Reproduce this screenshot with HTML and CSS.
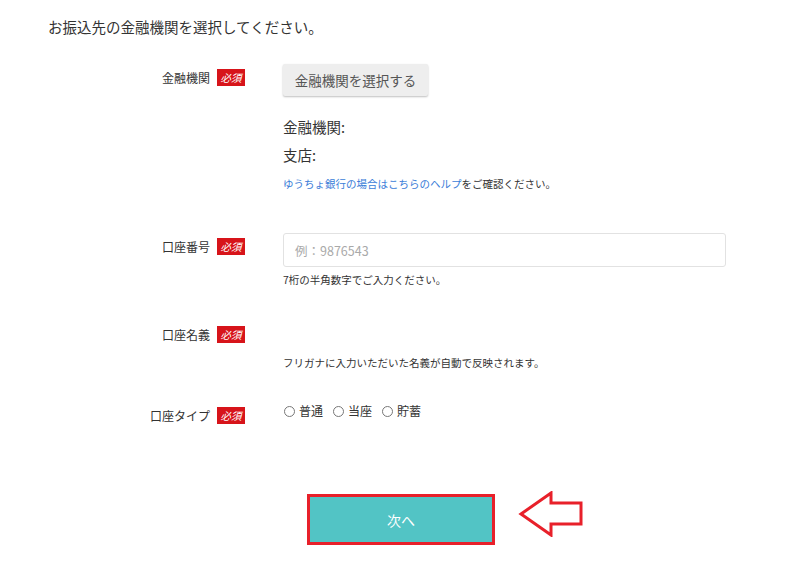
FILE: index.html
```html
<!DOCTYPE html>
<html lang="ja">
<head>
<meta charset="utf-8">
<title>振込先</title>
<link rel="stylesheet" href="styles.css">
</head>
<body>
<p class="lead">お振込先の金融機関を選択してください。</p>
<div class="form">
  <div class="row row-bank">
    <div class="label"><span class="label-text">金融機関</span><span class="req">必須</span></div>
    <div class="field">
      <button class="select-btn" type="button">金融機関を選択する</button>
      <div class="info info-first">金融機関:</div>
      <div class="info">支店:</div>
      <p class="help"><a class="link" href="#">ゆうちょ銀行の場合はこちらのヘルプ</a>をご確認ください。</p>
    </div>
  </div>
  <div class="row row-number">
    <div class="label"><span class="label-text">口座番号</span><span class="req">必須</span></div>
    <div class="field">
      <div class="input"><span class="placeholder">例：9876543</span></div>
      <p class="hint">7桁の半角数字でご入力ください。</p>
    </div>
  </div>
  <div class="row row-name">
    <div class="label"><span class="label-text">口座名義</span><span class="req">必須</span></div>
    <div class="field">
      <div class="spacer"></div>
      <p class="hint">フリガナに入力いただいた名義が自動で反映されます。</p>
    </div>
  </div>
  <div class="row row-type">
    <div class="label"><span class="label-text">口座タイプ</span><span class="req">必須</span></div>
    <div class="field">
      <div class="radios">
        <label class="radio"><span class="circle"></span>普通</label>
        <label class="radio"><span class="circle"></span>当座</label>
        <label class="radio"><span class="circle"></span>貯蓄</label>
      </div>
    </div>
  </div>
</div>
<div class="next-wrap">
  <button class="next-btn" type="button">次へ</button>
  <svg class="arrow" width="66" height="46" viewBox="0 0 66 46">
    <polygon points="3,23 33,2 33,12 63,12 63,33 33,33 33,44" fill="none" stroke="#e8202a" stroke-width="3" stroke-linejoin="miter"/>
  </svg>
</div>
</body>
</html>
```
FILE: styles.css
```css
* { box-sizing: border-box; }
body {
  margin: 0;
  font-family: "Noto Sans CJK JP", "Noto Sans", sans-serif;
  color: #333;
  background: #fff;
}
.lead {
  margin: 0;
  padding: 17px 0 0 48px;
  font-size: 14.5px;
  line-height: 20px;
}
.form { width: 726px; }
.row {
  display: grid;
  grid-template-columns: 245px 1fr;
  column-gap: 38px;
}
.label {
  display: flex;
  justify-content: flex-end;
  align-items: center;
  height: 23px;
  padding-top: 3px;
  align-self: start;
}
.label-text {
  font-size: 12px;
  line-height: 17px;
  margin-right: 7px;
}
.req {
  display: inline-block;
  width: 28px;
  height: 17px;
  background: #d7141a;
  color: #fff;
  font-size: 10.5px;
  line-height: 17px;
  text-align: center;
  font-style: italic;
}
.row-bank { margin-top: 27px; }
.select-btn {
  display: block;
  width: 145px;
  height: 32px;
  border: 0;
  border-radius: 2px;
  background: #eeeeee;
  box-shadow: 0 1px 2px rgba(0,0,0,0.25);
  color: #555;
  font-family: inherit;
  font-size: 13.5px;
  padding: 0;
}
.info {
  font-size: 14.5px;
  line-height: 28px;
}
.info-first { margin-top: 17px; }
.help {
  margin: 5px 0 0;
  font-size: 10.5px;
  line-height: 20px;
}
.link { color: #3b7dd8; text-decoration: none; }
.row-number { margin-top: 39px; }
.input {
  height: 34px;
  border: 1px solid #e2e2e2;
  border-radius: 3px;
  padding-left: 11px;
  display: flex;
  align-items: center;
}
.placeholder {
  color: #a9a9a9;
  font-size: 12.5px;
}
.hint {
  margin: 5px 0 0;
  font-size: 10.5px;
  line-height: 16px;
}
.row-name { margin-top: 33px; }
.spacer { height: 29px; }
.row-type { margin-top: 31px; }
.radios {
  display: flex;
  gap: 9px;
  height: 18px;
  align-items: center;
}
.radio {
  display: flex;
  align-items: center;
  font-size: 12px;
  line-height: 18px;
}
.circle {
  width: 11px;
  height: 11px;
  border: 1px solid #777;
  border-radius: 50%;
  margin: 0 4px 0 1px;
  background: #fff;
}
.next-wrap {
  position: relative;
  margin-top: 69px;
  display: flex;
  justify-content: center;
  padding-left: 2px;
}
.next-btn {
  width: 188px;
  height: 51px;
  border: 3px solid #e8202a;
  background: #52c4c5;
  color: #fff;
  font-family: inherit;
  font-size: 14px;
  padding: 0;
}
.arrow {
  position: absolute;
  left: 518px;
  top: -3px;
}
```
